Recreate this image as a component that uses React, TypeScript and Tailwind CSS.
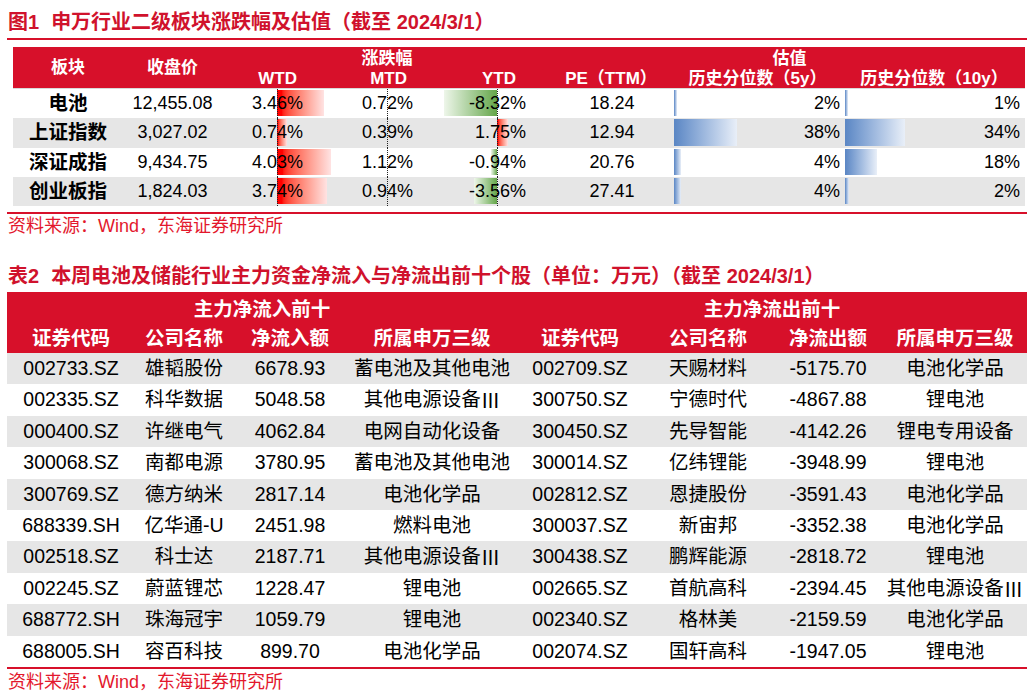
const RED = '#d7102a';

type IndexRow = {
  name: string;
  close: string;
  wtd: number;
  mtd: number;
  ytd: number;
  pe: string;
  p5: number;
  p10: number;
};

const INDEX_ROWS: IndexRow[] = [
  { name: '电池', close: '12,455.08', wtd: 3.46, mtd: 0.72, ytd: -8.32, pe: '18.24', p5: 2, p10: 1 },
  { name: '上证指数', close: '3,027.02', wtd: 0.74, mtd: 0.39, ytd: 1.75, pe: '12.94', p5: 38, p10: 34 },
  { name: '深证成指', close: '9,434.75', wtd: 4.03, mtd: 1.12, ytd: -0.94, pe: '20.76', p5: 4, p10: 18 },
  { name: '创业板指', close: '1,824.03', wtd: 3.74, mtd: 0.94, ytd: -3.56, pe: '27.41', p5: 4, p10: 2 },
];

type FlowRow = [string, string, string, string];

const INFLOW: FlowRow[] = [
  ['002733.SZ', '雄韬股份', '6678.93', '蓄电池及其他电池'],
  ['002335.SZ', '科华数据', '5048.58', '其他电源设备Ⅲ'],
  ['000400.SZ', '许继电气', '4062.84', '电网自动化设备'],
  ['300068.SZ', '南都电源', '3780.95', '蓄电池及其他电池'],
  ['300769.SZ', '德方纳米', '2817.14', '电池化学品'],
  ['688339.SH', '亿华通-U', '2451.98', '燃料电池'],
  ['002518.SZ', '科士达', '2187.71', '其他电源设备Ⅲ'],
  ['002245.SZ', '蔚蓝锂芯', '1228.47', '锂电池'],
  ['688772.SH', '珠海冠宇', '1059.79', '锂电池'],
  ['688005.SH', '容百科技', '899.70', '电池化学品'],
];

const OUTFLOW: FlowRow[] = [
  ['002709.SZ', '天赐材料', '-5175.70', '电池化学品'],
  ['300750.SZ', '宁德时代', '-4867.88', '锂电池'],
  ['300450.SZ', '先导智能', '-4142.26', '锂电专用设备'],
  ['300014.SZ', '亿纬锂能', '-3948.99', '锂电池'],
  ['002812.SZ', '恩捷股份', '-3591.43', '电池化学品'],
  ['300037.SZ', '新宙邦', '-3352.38', '电池化学品'],
  ['300438.SZ', '鹏辉能源', '-2818.72', '锂电池'],
  ['002665.SZ', '首航高科', '-2394.45', '其他电源设备Ⅲ'],
  ['002340.SZ', '格林美', '-2159.59', '电池化学品'],
  ['002074.SZ', '国轩高科', '-1947.05', '锂电池'],
];

const pct = (v: number) => `${v.toFixed(2)}%`;

// 罗马数字Ⅲ用 CJK 字体显示（全角）
function Cell({ text }: { text: string }) {
  if (!text.endsWith('Ⅲ')) return <>{text}</>;
  return (
    <>
      {text.slice(0, -1)}
      <span className="font-['Noto_Sans_CJK_SC',sans-serif]">Ⅲ</span>
    </>
  );
}

// 涨跌幅列：虚线轴 + 红/绿数据条
function ChangeCell({ v, axis, scale, bars, pr }: { v: number; axis: number; scale: number; bars: boolean; pr: string }) {
  const w = Math.abs(v) * scale;
  return (
    <div className={`relative h-full flex items-center justify-end ${pr}`}>
      {bars && v > 0 && (
        <div
          className="absolute top-[1px] bottom-[2px] bg-linear-to-r from-[#ff0000] from-10% to-[#ffe3e3]"
          style={{ left: axis, width: w }}
        />
      )}
      {bars && v < 0 && (
        <div
          className="absolute top-[1px] bottom-[2px] bg-linear-to-l from-[#64a648] to-[#eef6ea]"
          style={{ left: axis - w, width: w }}
        />
      )}
      <div className="absolute inset-y-0 border-l border-dotted border-[#222]" style={{ left: axis }} />
      <span className="relative">{pct(v)}</span>
    </div>
  );
}

function PctBarCell({ v, scale, pr }: { v: number; scale: number; pr: string }) {
  const w = Math.max(3, v * scale);
  return (
    <div className={`relative h-full flex items-center justify-end ${pr}`}>
      <div
        className="absolute left-[2px] top-[1px] bottom-[2px] bg-linear-to-r from-[#5a86c4] to-[#e9eff8]"
        style={{ width: w }}
      />
      <span className="relative">{v}%</span>
    </div>
  );
}

function IndexTable() {
  const cols = 'grid-cols-[110px_99px_88px_110px_110px_142px_171px_182px]';
  return (
    <div className="ml-[6px] w-[1012px] mt-[7px]">
      <div
        className={`grid ${cols} grid-rows-[22px_19px] text-white font-bold text-[17px] leading-[20px] border-b border-[#d9d9d9]`}
        style={{ backgroundColor: RED }}
      >
        <div className="row-span-2 flex items-center justify-center">板块</div>
        <div className="row-span-2 flex items-center justify-center">收盘价</div>
        <div className="col-span-3 flex items-end justify-center pl-[22px]">涨跌幅</div>
        <div className="col-span-3 flex items-end justify-center pl-[24px]">估值</div>
        <div className="flex items-center justify-end pr-[13px]">WTD</div>
        <div className="flex items-center justify-end pr-[13px]">MTD</div>
        <div className="flex items-center justify-end pr-[14px]">YTD</div>
        <div className="flex items-center justify-center pl-[20px] whitespace-nowrap">PE（TTM）</div>
        <div className="flex items-center justify-center whitespace-nowrap">历史分位数（5y）</div>
        <div className="flex items-center justify-center whitespace-nowrap">历史分位数（10y）</div>
      </div>
      {INDEX_ROWS.map((r, i) => (
        <div
          key={r.name}
          className={`grid ${cols} h-[29.25px] text-[18px] text-black ${i % 2 ? 'bg-[#e6e6e6]' : 'bg-white'}`}
        >
          <div className="flex items-center justify-center font-bold text-[19.5px]">{r.name}</div>
          <div className="flex items-center justify-center">{r.close}</div>
          <ChangeCell v={r.wtd} axis={55} scale={13.5} bars pr="pr-[7px]" />
          <ChangeCell v={r.mtd} axis={77} scale={0} bars={false} pr="pr-[7px]" />
          <ChangeCell v={r.ytd} axis={77} scale={6.4} bars pr="pr-[4px]" />
          <div className="flex items-center justify-center pl-[22px]">{r.pe}</div>
          <PctBarCell v={r.p5} scale={1.66} pr="pr-[3px]" />
          <PctBarCell v={r.p10} scale={1.76} pr="pr-[5px]" />
        </div>
      ))}
    </div>
  );
}

function FlowTable() {
  const cols = 'grid-cols-[128px_98px_114px_170px_126px_130px_110px_144px]';
  const rows = INFLOW.map((r, i) => [...r, ...OUTFLOW[i]]);
  return (
    <div className="w-[1020px] mt-[4px] border-b-2" style={{ borderColor: RED }}>
      <div
        className={`grid ${cols} grid-rows-[31px_30px] text-white font-bold text-[19.5px] leading-[24px]`}
        style={{ backgroundColor: RED }}
      >
        <div className="col-span-4 flex items-center justify-center pt-[3px]">主力净流入前十</div>
        <div className="col-span-4 flex items-center justify-center pt-[3px]">主力净流出前十</div>
        {['证券代码', '公司名称', '净流入额', '所属申万三级', '证券代码', '公司名称', '净流出额', '所属申万三级'].map(
          (h, i) => (
            <div key={i} className="flex items-center justify-center whitespace-nowrap">
              {h}
            </div>
          )
        )}
      </div>
      {rows.map((r, i) => (
        <div
          key={r[0]}
          className={`grid ${cols} h-[31.4px] text-[19.5px] text-black ${i % 2 ? 'bg-white' : 'bg-[#e6e6e6]'}`}
        >
          {r.map((c, j) => (
            <div key={j} className="flex items-center justify-center whitespace-nowrap">
              <Cell text={c} />
            </div>
          ))}
        </div>
      ))}
    </div>
  );
}

function Source() {
  return <div className="text-[18px] leading-[24px] pl-[1px] text-[#e3182d]">资料来源：Wind，东海证券研究所</div>;
}

export default function App() {
  return (
    <div className="w-[1036px] h-[693px] bg-white pl-[7px] font-['Liberation_Sans','Noto_Sans_CJK_SC',sans-serif] overflow-hidden">
      <div className="w-[1020px]">
        <div
          className="h-[40px] pt-[10px] pl-[1px] border-b-2 text-[20px] leading-[24px] font-bold whitespace-nowrap"
          style={{ borderColor: RED, color: '#d0122c' }}
        >
          <span className="mr-[12px]">图1</span>申万行业二级板块涨跌幅及估值（截至 2024/3/1）
        </div>
        <IndexTable />
        <div className="mt-[6px] border-b-2" style={{ borderColor: RED }} />
        <Source />
        <div
          className="mt-[26px] pl-[1px] text-[20px] leading-[24px] font-bold whitespace-nowrap"
          style={{ color: '#d0122c' }}
        >
          <span className="mr-[12px]">表2</span>本周电池及储能行业主力资金净流入与净流出前十个股（单位：万元）（截至 2024/3/1）
        </div>
        <FlowTable />
        <div className="pt-[1px]">
          <Source />
        </div>
      </div>
    </div>
  );
}
